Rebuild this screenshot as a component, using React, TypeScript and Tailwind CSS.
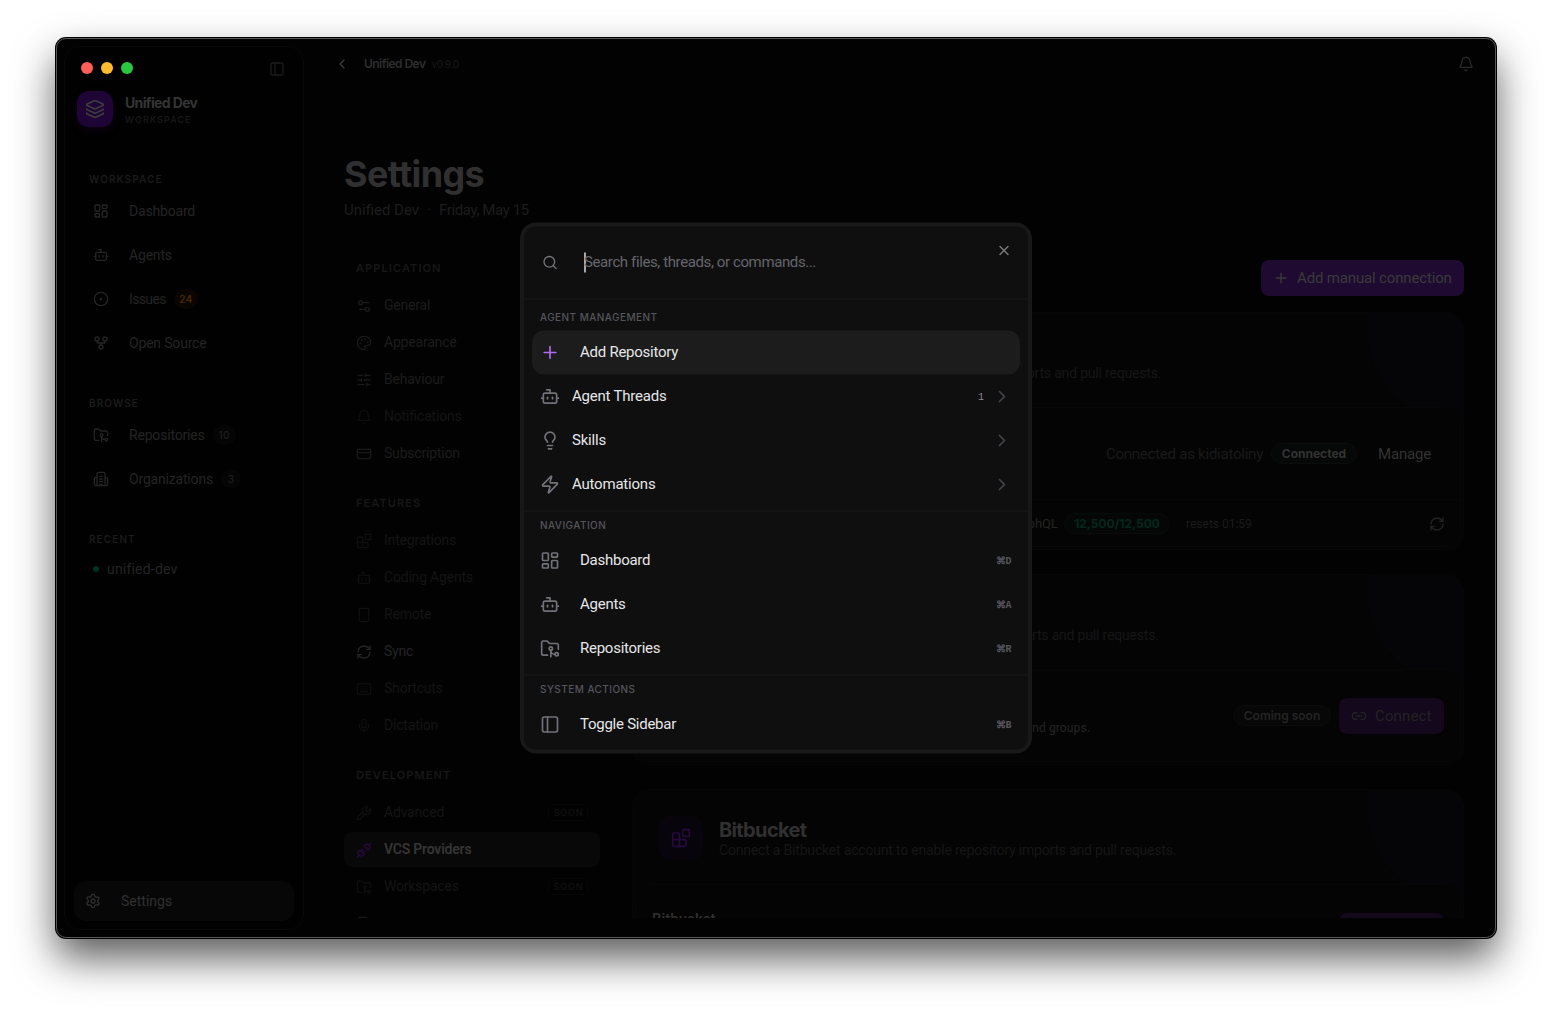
import React from "react";
import {
  Bell, Blocks, Bot, ChevronLeft, ChevronRight, CircleDot, CreditCard, FileText, FolderGit2, GitFork,
  Keyboard, Layers, LayoutDashboard, Lightbulb, Link2, Mic, Palette, PanelLeft, Plus, RefreshCw, Search, Settings,
  Settings2, SlidersHorizontal, Smartphone, Unplug, Wrench, X, Zap,
} from "lucide-react";

type Icon = React.ComponentType<{ className?: string }>;

function OrgIcon({ className = "" }: { className?: string }) {
  return (
    <svg viewBox="0 0 24 24" fill="none" stroke="currentColor" strokeWidth={2} strokeLinecap="round" strokeLinejoin="round" className={className}>
      <path d="M10 12h4M10 8h4M10 16h4M10 20h4" />
      <path d="M6 10H4a2 2 0 0 0-2 2v8a2 2 0 0 0 2 2h16a2 2 0 0 0 2-2v-8a2 2 0 0 0-2-2h-2" />
      <path d="M6 22V4a2 2 0 0 1 2-2h8a2 2 0 0 1 2 2v18" />
    </svg>
  );
}

/* ---------- sidebar ---------- */

function SideHeading({ children }: { children: React.ReactNode }) {
  return <div className="pl-6 font-[Inter] text-[10px] leading-4 font-semibold tracking-[0.11em] text-[#1b1b1b]">{children}</div>;
}

function SideItem({ icon: I, label, badge, amber }: { icon: Icon; label: string; badge?: string; amber?: boolean }) {
  return (
    <div className="flex h-11 items-center pl-7 text-[#242424]">
      <I className="size-4" />
      <span className={amber ? "ml-5 text-sm tracking-[-0.045em]" : "ml-5 text-sm tracking-[-0.013em]"}>{label}</span>
      {badge && (
        <span
          className={
            amber
              ? "ml-2 flex h-5 min-w-6 items-center justify-center rounded-full bg-[#0a0500] px-[5px] font-[Inter] text-[10px] font-semibold tracking-[0.03em] text-[#4a2900]"
              : "ml-2 flex h-5 min-w-5 items-center justify-center rounded-full bg-[#050505] px-1.5 font-[Inter] text-[10px] font-medium tracking-[0.03em] text-[#1f1f1f]"
          }
        >
          {badge}
        </span>
      )}
    </div>
  );
}

function Sidebar() {
  return (
    <aside className="mt-[7px] ml-[7px] flex h-[884px] w-60 shrink-0 flex-col rounded-2xl border border-[#080808] bg-[#010101]">
      <div className="mt-3 flex h-[18px] items-center pr-[18px] pl-4">
        <div className="flex gap-2">
          <span className="size-3 rounded-full bg-[#ff5f57]" />
          <span className="size-3 rounded-full bg-[#febc2e]" />
          <span className="size-3 rounded-full bg-[#28c840]" />
        </div>
        <PanelLeft className="mt-0.5 ml-auto size-4 text-[#1b1b1b]" />
      </div>
      <div className="mt-3.5 flex h-9 items-center gap-3 pl-3">
        <div className="flex size-9 items-center justify-center rounded-xl bg-[#1f0436] shadow-[0_4px_8px_rgba(40,5,70,0.3)]">
          <Layers className="size-5 text-[#3d3d3d]" />
        </div>
        <div className="flex flex-col">
          <span className="font-[Inter] text-[14px] leading-5 font-bold tracking-[-0.045em] text-[#343434]">Unified Dev</span>
          <span className="mt-px font-[Inter] text-[9px] leading-3 font-medium tracking-[0.12em] text-[#1b1b1b]">WORKSPACE</span>
        </div>
      </div>
      <div className="mt-11">
        <SideHeading>WORKSPACE</SideHeading>
        <div className="mt-0.5">
          <SideItem icon={LayoutDashboard} label="Dashboard" />
          <SideItem icon={Bot} label="Agents" />
          <SideItem icon={CircleDot} label="Issues" badge="24" amber />
          <SideItem icon={GitFork} label="Open Source" />
        </div>
      </div>
      <div className="mt-[30px]">
        <SideHeading>BROWSE</SideHeading>
        <div className="mt-0.5">
          <SideItem icon={FolderGit2} label="Repositories" badge="10" />
          <SideItem icon={OrgIcon} label="Organizations" badge="3" />
        </div>
      </div>
      <div className="mt-[30px]">
        <SideHeading>RECENT</SideHeading>
        <div className="flex h-11 items-center pl-7 text-[#242424]">
          <span className="size-1.5 rounded-full bg-[#003020]" />
          <span className="ml-2 text-sm tracking-[0.014em]">unified-dev</span>
        </div>
      </div>
      <div className="mx-[9px] mt-auto mb-2 flex h-10 items-center rounded-xl bg-[#070707] pl-[11px] text-[#303030]">
        <Settings className="size-4" />
        <span className="ml-5 text-sm">Settings</span>
      </div>
    </aside>
  );
}

/* ---------- settings navigation ---------- */

type NavEntry = { icon: Icon; label?: string; tone?: "dim" | "bright" | "active"; soon?: boolean };

const NAV: { title: string; items: NavEntry[] }[] = [
  {
    title: "APPLICATION",
    items: [
      { icon: Settings2, label: "General" },
      { icon: Palette, label: "Appearance" },
      { icon: SlidersHorizontal, label: "Behaviour" },
      { icon: Bell, label: "Notifications", tone: "dim" },
      { icon: CreditCard, label: "Subscription" },
    ],
  },
  {
    title: "FEATURES",
    items: [
      { icon: Blocks, label: "Integrations", tone: "dim" },
      { icon: Bot, label: "Coding Agents", tone: "dim" },
      { icon: Smartphone, label: "Remote", tone: "dim" },
      { icon: RefreshCw, label: "Sync", tone: "bright" },
      { icon: Keyboard, label: "Shortcuts", tone: "dim" },
      { icon: Mic, label: "Dictation", tone: "dim" },
    ],
  },
  {
    title: "DEVELOPMENT",
    items: [
      { icon: Wrench, label: "Advanced", tone: "dim", soon: true },
      { icon: Unplug, label: "VCS Providers", tone: "active" },
      { icon: FolderGit2, label: "Workspaces", tone: "dim", soon: true },
      { icon: FileText },
    ],
  },
];

function NavRow({ icon: I, label, tone, soon }: NavEntry) {
  const color =
    tone === "dim" ? "text-[#141414]" : tone === "active" ? "bg-[#080808] text-[#353535]" : tone === "bright" ? "text-[#242424]" : "text-[#1c1c1c]";
  const iconColor = tone === "active" ? "size-4 text-[#260a3d]" : tone === "dim" ? "size-4 text-[#0e0e0e]" : tone === "bright" ? "size-4" : "size-4 text-[#191919]";
  return (
    <div className={`flex h-[35px] shrink-0 items-center rounded-lg px-3 ${color}`}>
      <I className={iconColor} />
      {label && (
        <span className={tone === "active" ? "mb-px ml-3 text-sm font-semibold tracking-[-0.015em]" : "mb-px ml-3 text-sm tracking-[-0.014em]"}>{label}</span>
      )}
      {soon && (
        <span className="ml-auto flex h-[17px] w-10 items-center justify-center rounded border border-[#060606] pl-px font-[Inter] text-[9px] font-semibold tracking-[0.1em] text-[#0f0f0f]">
          SOON
        </span>
      )}
    </div>
  );
}

function SettingsNav() {
  return (
    <nav className="flex w-64 shrink-0 flex-col gap-6">
      {NAV.map((g) => (
        <div key={g.title} className="flex shrink-0 flex-col gap-0.5">
          <div className="mb-2.5 pl-3 font-[Inter] text-[11px] leading-4 font-semibold tracking-[0.1em] text-[#171717]">{g.title}</div>
          {g.items.map((item, index) => (
            <NavRow key={index} {...item} />
          ))}
        </div>
      ))}
    </nav>
  );
}

/* ---------- provider cards ---------- */

function ProviderCard({ name, children }: { name: string; children: React.ReactNode }) {
  return (
    <section className="relative shrink-0 overflow-hidden rounded-2xl border border-[#060606] bg-[#040404] p-0.5">
      <div className="absolute -top-20 -right-24 size-48 rounded-full bg-[#050508]" />
      <div className="relative flex items-center gap-4 p-6">
        <div className="flex size-11 items-center justify-center rounded-xl border border-[#08060c] bg-[#07050b]">
          <Blocks className="size-5 text-[#250a3d]" />
        </div>
        <div>
          <div className="font-[Inter] text-xl leading-6 font-bold tracking-[-0.032em] text-[#303030]">{name}</div>
          <div className="text-sm leading-4 tracking-[-0.0135em] text-[#161616]">
            Connect a {name} account to enable repository imports and pull requests.
          </div>
        </div>
      </div>
      <div className="relative rounded-2xl border border-[#070707] bg-[#040404]">{children}</div>
    </section>
  );
}

function ConnectButton() {
  return (
    <button className="flex h-9 w-[105px] items-center gap-2 rounded-lg bg-[#13081c] pl-3 text-[15px] tracking-[0.01em] text-[#232323]">
      <Link2 className="size-4" />
      <span className="mt-px">Connect</span>
    </button>
  );
}

function PendingRow({ name, detail }: { name: string; detail: string }) {
  return (
    <div className="flex h-[91px] items-center gap-2 px-4">
      <div className="mr-auto w-[438px]">
        <div className="text-[15px] leading-6 font-medium text-[#303030]">{name}</div>
        <div className="text-right text-xs leading-6 tracking-[0.01em] text-[#242424]">{detail}</div>
      </div>
      <span className="flex h-[21px] w-[98px] items-center justify-center rounded-full border border-[#0c0c0c] bg-[#070707] font-[Inter] text-xs font-semibold text-[#242424]">
        Coming soon
      </span>
      <ConnectButton />
    </div>
  );
}

function Providers() {
  return (
    <div className="flex min-w-0 flex-1 flex-col">
      <button className="flex h-9 w-[203px] shrink-0 items-center gap-2 self-end rounded-lg bg-[#1f0b31] pl-3 text-[15px] tracking-[-0.0105em] text-[#3a3a3a]">
        <Plus className="size-4" />
        Add manual connection
      </button>
      <div className="mt-4 flex flex-col gap-6">
        <ProviderCard name="GitHub">
          <div className="flex h-[91px] items-center px-4 text-[15px]">
            <span className="mr-auto font-medium text-[#303030]">GitHub</span>
            <span className="mt-px tracking-[-0.016em] text-[#1a1a1a]">Connected as kidiatoliny</span>
            <span className="ml-2 flex h-[21px] w-[86px] items-center justify-center rounded-full border border-[#090d0b] bg-[#060707] font-[Inter] text-xs font-bold text-[#333333]">
              Connected
            </span>
            <span className="mt-px ml-2 w-[79px] pl-[13px] tracking-[-0.012em] text-[#333333]">Manage</span>
          </div>
          <div className="flex h-[47px] items-center border-t border-[#070707] pr-[15px] pl-4 text-xs text-[#242424]">
            <span className="mt-px w-[406px] text-right text-[13px]">GraphQL</span>
            <span className="ml-1.5 flex h-[21px] w-[106px] items-center justify-center rounded-full border border-[#080c0a] bg-[#050706] pt-px font-[Inter] font-bold text-[#00291c]">
              12,500/12,500
            </span>
            <span className="mt-px ml-4 text-[#1b1b1b]">resets 01:59</span>
            <RefreshCw className="mt-px ml-auto size-4" />
          </div>
        </ProviderCard>
        <ProviderCard name="GitLab">
          <PendingRow name="GitLab" detail="Connect a GitLab account to import repositories, merge requests and groups." />
        </ProviderCard>
        <ProviderCard name="Bitbucket">
          <PendingRow name="Bitbucket" detail="Connect Bitbucket to import repositories and projects." />
        </ProviderCard>
      </div>
    </div>
  );
}

/* ---------- command palette ---------- */

function GroupHeading({ children }: { children: React.ReactNode }) {
  return <div className="pl-4 font-[Inter] text-[10px] leading-[27px] font-medium tracking-[0.045em] text-[#55555c]">{children}</div>;
}

function Command({ icon: I, label, keys, active }: { icon: Icon; label: string; keys?: string; active?: boolean }) {
  return (
    <div className={active ? "mx-2 flex h-11 items-center rounded-xl bg-[#1c1c1c] px-2" : "mx-2 flex h-11 items-center px-2"}>
      <I className={active ? "size-5 text-[#b06cf0]" : "size-5 text-[#71717a]"} />
      <span className="mb-px ml-5 text-[15px] tracking-[-0.017em] text-[#e6e6e8]">{label}</span>
      {keys && <span className="mt-px mr-px ml-auto font-['Liberation_Mono'] text-[10px] font-bold tracking-[-0.06em] text-[#55555c]">{keys}</span>}
    </div>
  );
}

function SubMenu({ icon: I, label, count }: { icon: Icon; label: string; count?: string }) {
  return (
    <div className="mx-2 flex h-11 items-center px-2">
      <I className="size-5 text-[#71717a]" />
      <span className="mb-px ml-3 text-[15px] tracking-[-0.014em] text-[#e6e6e8]">{label}</span>
      <span className="mr-2 ml-auto font-['Liberation_Mono'] text-[10px] text-[#8a8a91]">{count}</span>
      <ChevronRight className="size-5 text-[#45454b]" />
    </div>
  );
}

function CommandPalette() {
  return (
    <div className="absolute top-[184px] left-[463px] h-[531px] w-[512px] -translate-y-[0.5px] overflow-hidden rounded-2xl border-4 border-[#181818] bg-[#0f0f0f]">
      <div className="relative flex h-[72px] items-center pl-[18px]">
        <Search className="size-4 text-[#75757c]" />
        <span className="ml-[26px] h-5 w-0.5 bg-[#a8a8a8]" />
        <span className="mb-px -ml-0.5 text-[15px] tracking-[-0.026em] text-[#66666d]">Search files, threads, or commands...</span>
        <X className="absolute top-4 right-4 size-4 text-[#7c7c7c]" />
      </div>
      <div className="border-t border-[#181818] py-1">
        <GroupHeading>AGENT MANAGEMENT</GroupHeading>
        <Command icon={Plus} label="Add Repository" active />
        <SubMenu icon={Bot} label="Agent Threads" count="1" />
        <SubMenu icon={Lightbulb} label="Skills" />
        <SubMenu icon={Zap} label="Automations" />
      </div>
      <div className="border-t border-[#1a1a1a] pb-1">
        <GroupHeading>NAVIGATION</GroupHeading>
        <Command icon={LayoutDashboard} label="Dashboard" keys="⌘D" />
        <Command icon={Bot} label="Agents" keys="⌘A" />
        <Command icon={FolderGit2} label="Repositories" keys="⌘R" />
      </div>
      <div className="border-t border-[#1a1a1a]">
        <GroupHeading>SYSTEM ACTIONS</GroupHeading>
        <Command icon={PanelLeft} label="Toggle Sidebar" keys="⌘B" />
      </div>
    </div>
  );
}

export default function App() {
  return (
    <div className="h-[1012px] w-[1552px] overflow-hidden bg-white px-14 pt-[38px] font-[Roboto,sans-serif]">
      <div className="relative flex h-[900px] w-[1440px] rounded-[10px] border border-[#585858] bg-[#020202] shadow-[0_0_0_1px_#000,0_20px_40px_rgba(0,0,0,0.65)]">
        <Sidebar />
        <main className="flex min-w-0 flex-1 flex-col">
          <header className="flex h-[50px] shrink-0 items-center pr-[21px] pl-[30px]">
            <ChevronLeft className="size-4 text-[#3a3a3a]" />
            <span className="ml-3.5 font-[Inter] text-xs font-semibold tracking-[-0.045em] text-[#2e2e2e]">Unified Dev</span>
            <span className="mt-px ml-1.5 font-[Inter] text-[10px] tracking-[-0.035em] text-[#191919]">v0.9.0</span>
            <Bell className="ml-auto size-4 text-[#2a2a2a]" />
          </header>
          <div className="pt-[65px] pl-10">
            <h1 className="font-[Inter] text-4xl leading-10 font-bold tracking-[-0.018em] text-[#303030]">Settings</h1>
            <p className="mt-1.5 text-[15px] leading-5 text-[#1d1d1d]">
              Unified Dev<span className="mx-2">·</span><span className="tracking-[-0.025em]">Friday, May 15</span>
            </p>
          </div>
          <div className="mt-10 flex h-[658px] gap-8 overflow-hidden pr-[31px] pl-10">
            <SettingsNav />
            <Providers />
          </div>
        </main>
        <CommandPalette />
      </div>
    </div>
  );
}
